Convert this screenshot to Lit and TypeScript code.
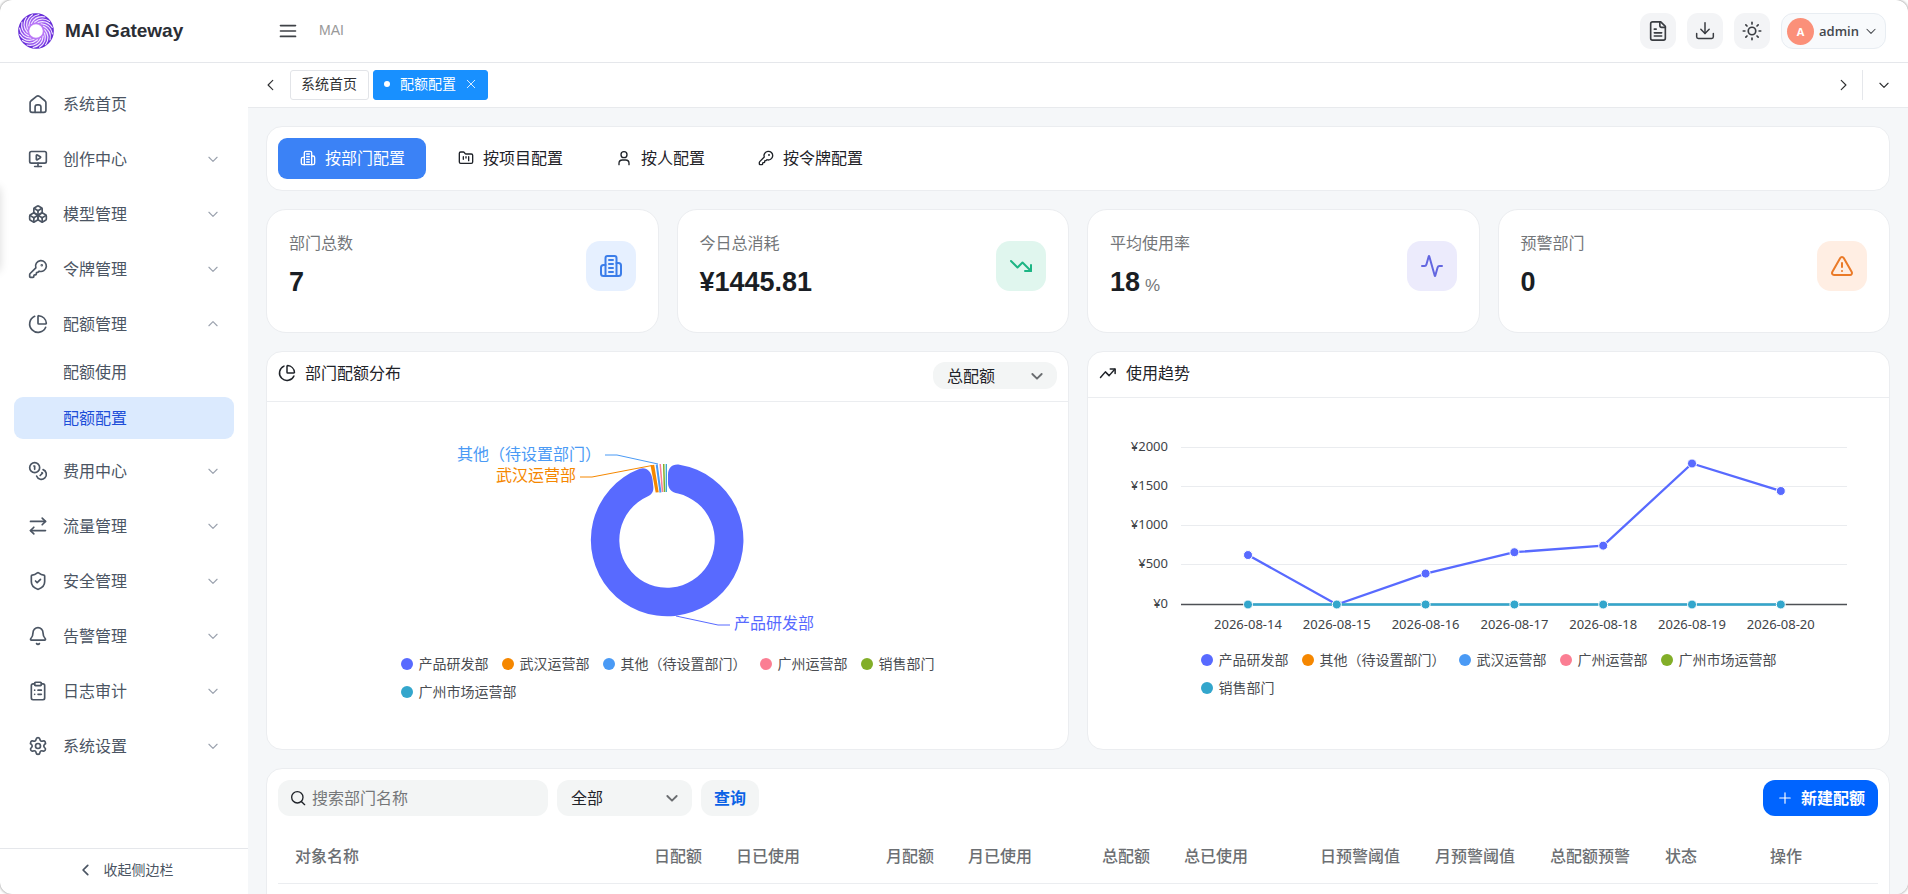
import { LitElement, html, svg, css, nothing } from "lit";
import { customElement, state } from "lit/decorators.js";
import { classMap } from "lit/directives/class-map.js";

const icons = {
  home: svg`<path d="M2.5 10.6c0-1 .4-1.9 1.2-2.5l6.5-5.2c1-.8 2.5-.8 3.6 0l6.5 5.2c.8.6 1.2 1.5 1.2 2.5v8.9a2.5 2.5 0 0 1-2.5 2.5H5a2.5 2.5 0 0 1-2.5-2.5z"/><path d="M8.500 22v-6.500a2.500 2.500 0 0 1 2.500-2.500h2a2.500 2.500 0 0 1 2.500 2.500V22"/>`,
  monitor: svg`<path d="M10 7.750a.75.75 0 0 1 1.140-.64l3.660 2.250a.75.75 0 0 1 0 1.280l-3.660 2.250a.75.75 0 0 1-1.140-.64z"/><path d="M12 17v4"/><path d="M8 21h8"/><rect x="2" y="3" width="20" height="14" rx="2"/>`,
  boxes: svg`<path d="M2.97 12.92A2 2 0 0 0 2 14.63v3.24a2 2 0 0 0 .97 1.71l3 1.8a2 2 0 0 0 2.06 0L12 19v-5.5l-5-3-4.03 2.42Z"/><path d="m7 16.5-4.74-2.85"/><path d="m7 16.5 5-3"/><path d="M7 16.5v5.17"/><path d="M12 13.5V19l3.97 2.38a2 2 0 0 0 2.06 0l3-1.8a2 2 0 0 0 .97-1.71v-3.24a2 2 0 0 0-.97-1.71L17 10.5l-5 3Z"/><path d="m17 16.5-5-3"/><path d="m17 16.5 4.74-2.85"/><path d="M17 16.5v5.17"/><path d="M7.97 4.42A2 2 0 0 0 7 6.13v4.37l5 3 5-3V6.13a2 2 0 0 0-.97-1.71l-3-1.8a2 2 0 0 0-2.06 0l-3 1.8Z"/><path d="M12 8 7.26 5.15"/><path d="m12 8 4.74-2.85"/><path d="M12 13.5V8"/>`,
  key: svg`<path d="M2.586 17.414A2 2 0 0 0 2 18.828V21a1 1 0 0 0 1 1h3a1 1 0 0 0 1-1v-1a1 1 0 0 1 1-1h1a1 1 0 0 0 1-1v-1a1 1 0 0 1 1-1h.172a2 2 0 0 0 1.414-.586l.814-.814a6.5 6.5 0 1 0-4-4z"/><circle cx="16.5" cy="7.5" r=".5" fill="currentColor"/>`,
  pie: svg`<path d="M21 12c.552 0 1.005-.449.95-.998a10 10 0 0 0-8.953-8.951c-.55-.055-.998.398-.998.95v8a1 1 0 0 0 1 1z"/><path d="M21.21 15.89A10 10 0 1 1 8 2.83"/>`,
  coins: svg`<circle cx="8" cy="8" r="6"/><path d="M18.09 10.37A6 6 0 1 1 10.34 18"/><path d="M7 6h1v4"/><path d="m16.71 13.88.7.71-2.82 2.82"/>`,
  swap: svg`<path d="m17 2.5 4 4-4 4"/><path d="M3 6.5h18"/><path d="m7 21.5-4-4 4-4"/><path d="M21 17.5H3"/>`,
  shield: svg`<path d="M20 13c0 5-3.5 7.5-7.66 8.95a1 1 0 0 1-.67-.01C7.5 20.5 4 18 4 13V6a1 1 0 0 1 1-1c2 0 4.5-1.2 6.24-2.72a1.17 1.17 0 0 1 1.52 0C14.51 3.81 17 5 19 5a1 1 0 0 1 1 1z"/><path d="m9 12 2 2 4-4"/>`,
  bell: svg`<path d="M10.268 21a2 2 0 0 0 3.464 0"/><path d="M3.262 15.326A1 1 0 0 0 4 17h16a1 1 0 0 0 .74-1.673C19.41 13.956 18 12.499 18 8A6 6 0 0 0 6 8c0 4.499-1.411 5.956-2.738 7.326"/>`,
  clipboard: svg`<rect x="8" y="1.5" width="8" height="4" rx="1"/><path d="M16 3.5h2a2 2 0 0 1 2 2V20.5a2 2 0 0 1-2 2H6a2 2 0 0 1-2-2V5.5a2 2 0 0 1 2-2h2"/><path d="M12 11h4"/><path d="M12 16h4"/><path d="M8 11h.01"/><path d="M8 16h.01"/>`,
  gear: svg`<path d="M9.671 4.136a2.34 2.34 0 0 1 4.659 0 2.34 2.34 0 0 0 3.319 1.915 2.34 2.34 0 0 1 2.33 4.033 2.34 2.34 0 0 0 0 3.831 2.34 2.34 0 0 1-2.33 4.033 2.34 2.34 0 0 0-3.319 1.915 2.34 2.34 0 0 1-4.659 0 2.34 2.34 0 0 0-3.32-1.915 2.34 2.34 0 0 1-2.33-4.033 2.34 2.34 0 0 0 0-3.831A2.34 2.34 0 0 1 6.35 6.051a2.34 2.34 0 0 0 3.319-1.915"/><circle cx="12" cy="12" r="3"/>`,
  menu: svg`<path d="M3 5.5h18M3 12h18M3 18.5h18"/>`,
  doc: svg`<path d="M15 2H6a2 2 0 0 0-2 2v16a2 2 0 0 0 2 2h12a2 2 0 0 0 2-2V7Z"/><path d="M14 2v4a2 2 0 0 0 2 2h4"/><path d="M10 10H8"/><path d="M16 14H8"/><path d="M16 17.5H8"/>`,
  download: svg`<path d="M2 15v4a2 2 0 0 0 2 2h16a2 2 0 0 0 2-2v-4"/><path d="m7 10 5 5 5-5"/><path d="M12 15V2"/>`,
  sun: svg`<circle cx="12" cy="12" r="4.5"/><path d="M12 1.5v2M12 20.5v2M4.6 4.6 6 6M18 18l1.4 1.4M1.5 12h2M20.5 12h2M6 18l-1.4 1.4M19.4 4.6 18 6"/>`,
  down: svg`<path d="m5 9 7 7 7-7"/>`,
  left: svg`<path d="m15 4-8 8 8 8"/>`,
  right: svg`<path d="m9 4 8 8-8 8"/>`,
  close: svg`<path d="M3 3l18 18M21 3 3 21"/>`,
  plus: svg`<path d="M3 12h18M12 3v18"/>`,
  search: svg`<circle cx="11" cy="11" r="8.5"/><path d="m17.5 17.5 4.5 4.5"/>`,
  building: svg`<path d="M6.5 22V4a2 2 0 0 1 2-2h7a2 2 0 0 1 2 2v18Z"/><path d="M6.500 11H4.500A2.500 2.500 0 0 0 2 13.500v6A2.500 2.500 0 0 0 4.500 22h2"/><path d="M17.500 9h2A2.500 2.500 0 0 1 22 11.500v8a2.500 2.500 0 0 1-2.500 2.500h-2"/><path d="M10 6h4M10 10h4M10 14h4M10 18h4"/>`,
  folder: svg`<path d="M4 20h16a2 2 0 0 0 2-2V8a2 2 0 0 0-2-2h-7.9a2 2 0 0 1-1.69-.9L9.6 3.9A2 2 0 0 0 7.93 3H4a2 2 0 0 0-2 2v13c0 1.1.9 2 2 2Z"/><path d="M8 10v4M12 10v2M16 10v6"/>`,
  person: svg`<circle cx="12" cy="7" r="4.500"/><path d="M4.500 22v-2a5 5 0 0 1 5-5h5a5 5 0 0 1 5 5v2"/>`,
  trendDown: svg`<path d="m22 17-8.500-8.500-5 5L2 7"/><path d="M16 17h6v-6"/>`,
  trendUp: svg`<path d="m2 18 6.500-7.500 5 5L21 7"/><path d="M15 6.500h6.500v6"/>`,
  pulse: svg`<path d="M22 12h-2.480a2 2 0 0 0-1.930 1.460l-2.350 8.360a.25.25 0 0 1-.48 0L9.240 2.180a.25.25 0 0 0-.48 0l-2.350 8.360A2 2 0 0 1 4.490 12H2"/>`,
  warn: svg`<path d="m21.730 18-8-14a2 2 0 0 0-3.480 0l-8 14A2 2 0 0 0 4 21h16a2 2 0 0 0 1.730-3"/><path d="M12 9v4"/><path d="M12 17h.01"/>`,
};

type IconName = keyof typeof icons;

const icon = (name: IconName, cls = "") =>
  html`<svg class="icon ${cls}" viewBox="0 0 24 24" aria-hidden="true">${icons[name]}</svg>`;

interface MenuEntry {
  label: string;
  icon: IconName;
  leaf?: boolean;
  children?: string[];
}

const menu: MenuEntry[] = [
  { label: "系统首页", icon: "home", leaf: true },
  { label: "创作中心", icon: "monitor" },
  { label: "模型管理", icon: "boxes" },
  { label: "令牌管理", icon: "key" },
  { label: "配额管理", icon: "pie", children: ["配额使用", "配额配置"] },
  { label: "费用中心", icon: "coins" },
  { label: "流量管理", icon: "swap" },
  { label: "安全管理", icon: "shield" },
  { label: "告警管理", icon: "bell" },
  { label: "日志审计", icon: "clipboard" },
  { label: "系统设置", icon: "gear" },
];

const modes: { label: string; icon: IconName }[] = [
  { label: "按部门配置", icon: "building" },
  { label: "按项目配置", icon: "folder" },
  { label: "按人配置", icon: "person" },
  { label: "按令牌配置", icon: "key" },
];

const stats: { label: string; value: string; unit?: string; icon: IconName; tone: string }[] = [
  { label: "部门总数", value: "7", icon: "building", tone: "blue" },
  { label: "今日总消耗", value: "¥1445.81", icon: "trendDown", tone: "green" },
  { label: "平均使用率", value: "18", unit: "%", icon: "pulse", tone: "violet" },
  { label: "预警部门", value: "0", icon: "warn", tone: "orange" },
];

const palette = ["c1", "c2", "c3", "c4", "c5", "c6"];
const pieLegend = ["产品研发部", "武汉运营部", "其他（待设置部门）", "广州运营部", "销售部门", "广州市场运营部"];
const lineLegend = ["产品研发部", "其他（待设置部门）", "武汉运营部", "广州运营部", "广州市场运营部", "销售部门"];

const days = ["2026-08-14", "2026-08-15", "2026-08-16", "2026-08-17", "2026-08-18", "2026-08-19", "2026-08-20"];
const usage = [630, 0, 394, 666, 750, 1796, 1445.81];
const ticks = [2000, 1500, 1000, 500, 0];

const columns = [
  { label: "对象名称", cls: "w-name" },
  { label: "日配额", cls: "w-quota num" },
  { label: "日已使用", cls: "w-quota" },
  { label: "月配额", cls: "w-quota num" },
  { label: "月已使用", cls: "w-used" },
  { label: "总配额", cls: "w-quota num" },
  { label: "总已使用", cls: "w-total" },
  { label: "日预警阈值", cls: "w-warn" },
  { label: "月预警阈值", cls: "w-warn" },
  { label: "总配额预警", cls: "w-warn" },
  { label: "状态", cls: "w-state" },
  { label: "操作", cls: "w-action" },
];

@customElement("app-root")
export class AppRoot extends LitElement {
  @state() private mode = 0;
  @state() private page = "配额配置";

  static styles = css`
    :host {
      display: block;
      height: 100vh;
      overflow: hidden;
      background: #fff;
      color: #1f2329;
      font-family: "Noto Sans", "Noto Sans CJK SC", sans-serif;
      font-size: 16px;
      line-height: 24px;
    }
    * { box-sizing: border-box; }
    button, input, select { font: inherit; color: inherit; border: 0; background: none; margin: 0; padding: 0; }
    button, select { cursor: pointer; }
    a { color: inherit; text-decoration: none; }
    .icon {
      width: 20px; height: 20px; flex: none; display: block;
      fill: none; stroke: currentColor; stroke-width: 2; stroke-linecap: round; stroke-linejoin: round;
    }
    .icon.s10 { width: 10px; height: 10px; }
    .icon.s14 { width: 14px; height: 14px; }
    .icon.s16 { width: 16px; height: 16px; }
    .icon.s18 { width: 18px; height: 18px; }
    .icon.s22 { width: 22px; height: 22px; }
    .icon.s24 { width: 24px; height: 24px; }
    .icon.thin { stroke-width: 1.8; }
    .icon.bold { stroke-width: 3; }
    .icon.up { transform: rotate(180deg); }

    .frame {
      position: relative;
      height: 100%;
      display: flex; flex-direction: column;
      border-radius: 12px; overflow: hidden;
      background: #fff;
      box-shadow: 0 0 3px #777;
    }
    .edge {
      position: absolute; left: -12px; top: 184px; width: 12px; height: 86px;
      border-radius: 6px; box-shadow: 0 2px 10px rgba(0, 0, 0, .15);
    }

    .header { display: flex; align-items: center; height: 63px; flex: none; border-bottom: 1px solid #e5e7eb; }
    .brand { width: 248px; padding-left: 18px; display: flex; align-items: center; gap: 11px; flex: none; }
    .brand svg { width: 36px; height: 36px; }
    .brand h1 { margin: 0; font: bold 19px/24px "Liberation Sans", Arial, sans-serif; color: #2b2e35; }
    .burger { margin-left: 30px; color: #3f4247; }
    .crumb { margin-left: 21px; padding-bottom: 2px; font: 14px/24px "Liberation Sans", Arial, sans-serif; color: #999; flex: 1; }
    .actions { display: flex; align-items: center; gap: 11px; padding-right: 22px; }
    .square {
      width: 36px; height: 36px; border-radius: 11px; background: #f3f4f6; color: #3a3d42;
      display: grid; place-items: center;
    }
    .user {
      height: 36px; padding: 0 7px 0 5px; border-radius: 12px; border: 1px solid #e8edf2; background: #f8fafc;
      display: flex; align-items: center; gap: 5px; font-family: "Open Sans", sans-serif; font-size: 13px; font-weight: 600; color: #44474c;
    }
    .avatar {
      width: 27px; height: 27px; border-radius: 50%; background: #fb9079; color: #fff;
      font-size: 11px; font-weight: 700; line-height: 27px; text-align: center;
    }

    .body { flex: 1; min-height: 0; display: flex; }
    .side { width: 248px; flex: none; display: flex; flex-direction: column; }
    .nav { flex: 1; min-height: 0; padding: 13px 14px 0; margin: 0; list-style: none; overflow: auto; scrollbar-width: none; }
    .nav ul { list-style: none; margin: 0; padding: 0; }
    .entry {
      width: 100%; height: 55px; padding: 0 14px; display: flex; align-items: center; gap: 15px;
      color: #4b5563; text-align: left;
    }
    .entry .text { flex: 1; }
    .entry .caret { color: #9ca3af; }
    .sub {
      display: block; height: 42px; margin-bottom: 4px; padding-left: 49px; border-radius: 9px;
      line-height: 42px; color: #4b5563;
    }
    .sub.on { background: #dbeafe; color: #1d4ed8; }
    .fold {
      height: 46px; flex: none; border-top: 1px solid #e5e7eb; color: #4b5563; font-size: 14px; padding: 0 0 3px 4px;
      display: flex; align-items: center; justify-content: center; gap: 11px;
    }

    .main { flex: 1; min-width: 0; display: flex; flex-direction: column; background: #f5f7f9; }
    .tabs { height: 45px; flex: none; display: flex; align-items: center; padding: 0 4px; background: #fff; border-bottom: 1px solid #e8eaed; }
    .arrow { width: 38px; height: 30px; display: grid; place-items: center; color: #303133; }
    .arrow.next { margin-left: auto; }
    .arrow.more { border-left: 1px solid #e5e7eb; width: 42px; }
    .tab {
      height: 30px; padding: 0 11px 2px 10px; border: 1px solid #e2e4e8; border-radius: 3px; font-size: 14px; color: #303133;
      display: flex; align-items: center;
    }
    .tab + .tab { margin-left: 4px; }
    .tab.on { background: #1890ff; border-color: #1890ff; color: #fff; gap: 10px; }
    .dot { width: 6px; height: 6px; border-radius: 50%; background: #fff; }

    .content {
      flex: 1; min-height: 0; padding: 18px; overflow: auto; scrollbar-width: none;
      display: flex; flex-direction: column; gap: 18px;
    }
    .card { background: #fff; border: 1px solid #ebedf0; border-radius: 16px; flex: none; }
    .modes { display: flex; gap: 10px; padding: 11px; }
    .mode { height: 41px; padding: 0 21px 2px 22px; border-radius: 9px; display: flex; align-items: center; gap: 9px; }
    .mode.on { background: #3b82f6; color: #fff; }

    .stats { display: grid; grid-template-columns: repeat(4, 1fr); gap: 18px; flex: none; }
    .stat { height: 124px; padding: 21px 22px; border-radius: 20px; display: flex; justify-content: space-between; align-items: flex-start; }
    .stat dl { margin: 0; }
    .stat dt { color: #737679; }
    .stat dd { margin: 11px 0 0; font: bold 27px/32px "Liberation Sans", Arial, sans-serif; color: #1a1e24; }
    .stat .unit { font-size: 17px; font-weight: 400; color: #737679; margin-left: 5px; }
    .tile { width: 50px; height: 50px; margin-top: 10px; border-radius: 14px; display: grid; place-items: center; }
    .blue { background: #e6f0ff; color: #3b7de9; }
    .green { background: #e0f6ee; color: #1db584; }
    .violet { background: #ecebfc; color: #6366e0; }
    .orange { background: #ffeee3; color: #ea7a28; }

    .charts { display: grid; grid-template-columns: 1fr 1fr; gap: 18px; flex: none; }
    .chart { padding-bottom: 43px; min-width: 0; }
    .chart header { display: flex; align-items: flex-start; padding: 9px 11px 12px; border-bottom: 1px solid #ebedf0; }
    .chart h2 { margin: 0; font-size: 16px; font-weight: 400; line-height: 24px; display: flex; align-items: center; gap: 9px; flex: 1; }
    .pick { display: grid; align-items: center; background: #f3f5f5; border-radius: 12px; }
    .pick > * { grid-area: 1 / 1; }
    .pick .icon { justify-self: end; margin-right: 12px; pointer-events: none; color: #6a6d70; stroke-width: 2.8; }
    .pick select { appearance: none; width: 100%; height: 36px; padding: 0 36px 0 14px; }
    .pick.small { width: 124px; margin-top: 1px; }
    .pick.small select { height: 27px; }
    .plot { display: block; width: 100%; height: auto; }
    .plot text { font-size: 13px; fill: #404347; }
    .plot .callout { font-size: 16px; }
    .legend { list-style: none; margin: 0 auto; padding: 0; display: flex; flex-wrap: wrap; column-gap: 13px; font-size: 14px; line-height: 28px; color: #4a4d52; }
    .legend.pie { max-width: 534px; }
    .legend.line { max-width: 576px; }
    .legend li { display: flex; align-items: center; gap: 6px; }
    .mark { width: 12px; height: 12px; border-radius: 50%; background: var(--c); }
    .c1 { --c: #586aff; } .c2 { --c: #f58700; } .c3 { --c: #4a9af5; }
    .c4 { --c: #fb7e93; } .c5 { --c: #82ae28; } .c6 { --c: #33a6cc; }
    .fillc { fill: var(--c) !important; }
    .linec { stroke: var(--c); fill: none; }

    .list { padding: 11px; min-height: 180px; }
    .tools { display: flex; gap: 9px; margin-bottom: 14px; }
    .find { width: 270px; height: 36px; padding: 0 12px; border-radius: 12px; background: #f3f5f5; display: flex; align-items: center; gap: 6px; }
    .find input { flex: 1; min-width: 0; outline: 0; height: 36px; }
    .find input::placeholder { color: #757779; opacity: 1; }
    .tools .pick { width: 135px; }
    .query { width: 58px; height: 36px; border-radius: 12px; background: #f3f5f5; color: #0b62e6; font-weight: 700; }
    .create {
      margin-left: auto; height: 36px; padding: 0 13px 0 15px; border-radius: 12px; background: #0064ff; color: #fff; font-weight: 700;
      display: flex; align-items: center; gap: 9px;
    }
    table { width: 100%; table-layout: fixed; border-collapse: collapse; }
    th { height: 53px; padding: 0 17px; text-align: left; font-weight: 500; color: #6c6f73; border-bottom: 1px solid #ebedf0; white-space: nowrap; }
    th.num { text-align: right; }
    .w-name { width: 325px; } .w-quota { width: 116px; } .w-used { width: 100px; } .w-total { width: 136px; }
    .w-warn { width: 115px; } .w-state { width: 105px; } .w-action { width: 125px; }
  `;

  private logo() {
    return html`<svg viewBox="-18 -18 36 36" aria-hidden="true">
      <defs>
        <radialGradient id="ring" gradientUnits="userSpaceOnUse" cx="0" cy="0" r="18">
          <stop offset=".38" stop-color="#c07ff8" />
          <stop offset=".75" stop-color="#9050ec" />
          <stop offset="1" stop-color="#5a22d2" />
        </radialGradient>
      </defs>
      <circle r="12.3" fill="none" stroke="url(#ring)" stroke-width="11" />
      ${Array.from(
        { length: 16 },
        (_, i) => svg`<path d="M2 -8.600C8 -10.500 13 -8.500 16.300 -3.600" transform="rotate(${(i * 360) / 16})" fill="none" stroke="#f3e8ff" stroke-width="1.100" stroke-linecap="round"/>`
      )}
    </svg>`;
  }

  private renderMenu(m: MenuEntry) {
    return html`<li>
      <button class="entry">
        ${icon(m.icon)}<span class="text">${m.label}</span>
        ${m.leaf ? nothing : icon("down", `caret s14 ${m.children ? "up" : ""}`)}
      </button>
      ${m.children
        ? html`<ul>
            ${m.children.map(
              (c) => html`<li>
                <a class=${classMap({ sub: true, on: c === this.page })} href="#" @click=${(e: Event) => { e.preventDefault(); this.page = c; }}>${c}</a>
              </li>`
            )}
          </ul>`
        : nothing}
    </li>`;
  }

  private pieChart() {
    return html`<svg class="plot" viewBox="0 0 801 248" role="img" aria-label="部门配额分布">
      <g transform="translate(400 138)">
        <path class="c1 fillc" d="M12.5 -75.3A76.3 76.3 0 1 1 -27.3 -71.2C-21 -73.5 -15.6 -69 -14.5 -60.7L-13.7 -53.3C-13.3 -48.5 -15 -45.5 -19.5 -43.5A47.7 47.7 0 1 0 11 -46.4C4.5 -47.5 1 -51.5 1 -57V-65C1 -72.5 5.5 -76.3 12.5 -75.3Z"/>
        <path class="c2 fillc" d="M-16.5 -74.5 -12.8 -75.3 -8.3 -47.7 -11.3 -47.4Z"/>
        <path class="c3 linec" stroke-width="2" d="M-10.3 -75.5 -6.5 -47.5"/>
        <path class="c4 linec" stroke-width="1.5" d="M-6.8 -76 -4.5 -48"/>
        <path class="c5 linec" stroke-width="1.5" d="M-3.3 -76 -2.5 -48"/>
        <path class="c6 linec" stroke-width="1.3" d="M-.7 -76V-48"/>
      </g>
      <path class="c3 linec" d="M338 53h12l41 9"/>
      <path class="c2 linec" d="M313 75h12l60-11.5"/>
      <path class="c1 linec" d="M409 214l42 9h12"/>
      <text class="c3 fillc callout" x="190" y="58">其他（待设置部门）</text>
      <text class="c2 fillc callout" x="229" y="79">武汉运营部</text>
      <text class="c1 fillc callout" x="467" y="227">产品研发部</text>
    </svg>`;
  }

  private lineChart() {
    const x = (i: number) => 160 + i * 88.8;
    const y = (v: number) => 206.5 - (v / 2000) * 157;
    const pts = usage.map((v, i) => `${x(i)},${y(v)}`).join(" ");
    return html`<svg class="plot" viewBox="0 0 801 248" role="img" aria-label="使用趋势">
      ${ticks.map(
        (t) => svg`<line x1="93" x2="759" y1=${Math.round(y(t)) - 0.5} y2=${Math.round(y(t)) - 0.5} stroke=${t ? "#eaecef" : "#4e5156"} stroke-width=${t ? 1 : 1.5}/>
          <text x="80" y=${y(t) + 3} text-anchor="end">¥${t}</text>`
      )}
      <polyline class="c1 linec" stroke-width="2.3" points=${pts} />
      ${usage.map((v, i) => svg`<circle class="c1 fillc" cx=${x(i)} cy=${y(v)} r="4.5" stroke="#fff"/>`)}
      <line class="c6 linec" stroke-width="2.3" x1=${x(0)} x2=${x(6)} y1="206.5" y2="206.5" />
      ${days.map(
        (d, i) => svg`<circle class="c6 fillc" cx=${x(i)} cy="206.5" r="4.5" stroke="#fff"/>
          <text x=${x(i)} y="231" text-anchor="middle">${d}</text>`
      )}
    </svg>`;
  }

  private legend(names: string[], cls: string) {
    return html`<ul class="legend ${cls}">
      ${names.map((n, i) => html`<li><span class="mark ${palette[i]}"></span>${n}</li>`)}
    </ul>`;
  }

  render() {
    return html`<div class="frame">
      <div class="header">
        <div class="brand">${this.logo()}<h1>MAI Gateway</h1></div>
        <button class="burger" aria-label="菜单">${icon("menu")}</button>
        <span class="crumb">MAI</span>
        <div class="actions">
          <button class="square" aria-label="文档">${icon("doc", "s22 thin")}</button>
          <button class="square" aria-label="下载">${icon("download", "thin")}</button>
          <button class="square" aria-label="主题">${icon("sun")}</button>
          <button class="user"><span class="avatar">A</span>admin${icon("down", "s14 thin")}</button>
        </div>
      </div>
      <div class="body">
        <aside class="side">
          <ul class="nav">${menu.map((m) => this.renderMenu(m))}</ul>
          <button class="fold">${icon("left", "s14 bold")}收起侧边栏</button>
        </aside>
        <div class="main">
          <div class="tabs">
            <button class="arrow" aria-label="向左">${icon("left", "s14")}</button>
            <button class="tab">系统首页</button>
            <button class="tab on"><span class="dot"></span>配额配置${icon("close", "s10")}</button>
            <button class="arrow next" aria-label="向右">${icon("right", "s14")}</button>
            <button class="arrow more" aria-label="更多">${icon("down", "s14")}</button>
          </div>
          <div class="content">
            <div class="card modes">
              ${modes.map(
                (m, i) => html`<button class=${classMap({ mode: true, on: i === this.mode })} @click=${() => (this.mode = i)}>
                  ${icon(m.icon, "s16")}${m.label}
                </button>`
              )}
            </div>
            <div class="stats">
              ${stats.map(
                (s) => html`<div class="card stat">
                  <dl>
                    <dt>${s.label}</dt>
                    <dd>${s.value}${s.unit ? html`<span class="unit">${s.unit}</span>` : nothing}</dd>
                  </dl>
                  <span class="tile ${s.tone}">${icon(s.icon, "s24")}</span>
                </div>`
              )}
            </div>
            <div class="charts">
              <section class="card chart">
                <header>
                  <h2>${icon("pie", "s18")}部门配额分布</h2>
                  <label class="pick small">
                    <select aria-label="配额类型"><option>总配额</option><option>月配额</option><option>日配额</option></select>
                    ${icon("down", "s16")}
                  </label>
                </header>
                ${this.pieChart()} ${this.legend(pieLegend, "pie")}
              </section>
              <section class="card chart">
                <header><h2>${icon("trendUp", "s18")}使用趋势</h2></header>
                ${this.lineChart()} ${this.legend(lineLegend, "line")}
              </section>
            </div>
            <section class="card list">
              <div class="tools">
                <label class="find">
                  ${icon("search", "s16")}
                  <input type="text" aria-label="搜索部门名称" placeholder="搜索部门名称" />
                </label>
                <label class="pick">
                  <select aria-label="状态"><option>全部</option></select>
                  ${icon("down", "s16")}
                </label>
                <button class="query">查询</button>
                <button class="create">${icon("plus", "s14")}新建配额</button>
              </div>
              <table>
                <thead>
                  <tr>${columns.map((c) => html`<th class=${c.cls} scope="col">${c.label}</th>`)}</tr>
                </thead>
              </table>
            </section>
          </div>
        </div>
      </div>
      <div class="edge"></div>
    </div>`;
  }
}
